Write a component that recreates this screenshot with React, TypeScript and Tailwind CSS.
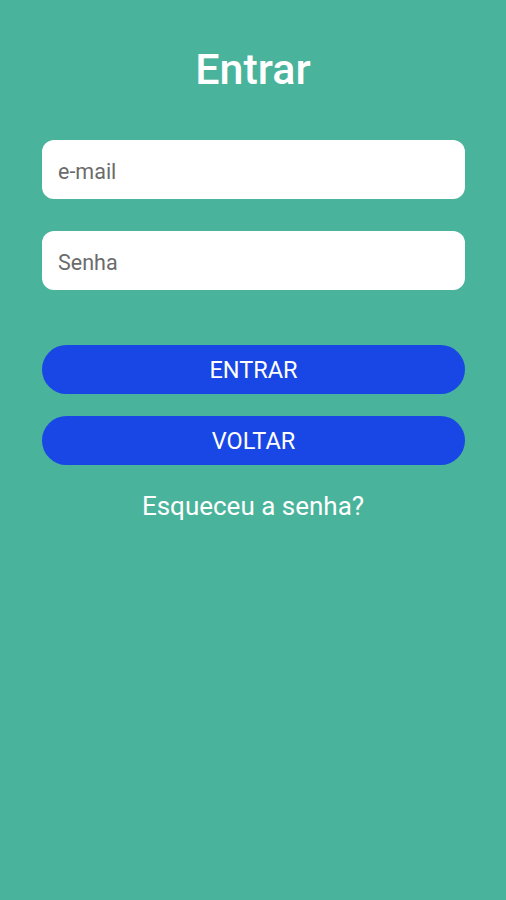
import React from "react";

export default function App() {
  return (
    <div
      className="w-[506px] h-[900px] bg-[#49b39b] flex flex-col px-[42px]"
      style={{ fontFamily: "Roboto, 'Noto Sans', sans-serif" }}
    >
      <h1 className="mt-[45px] h-[48px] leading-[48px] text-center text-white text-[43px] font-medium">
        Entrar
      </h1>
      <div className="mt-[47px] h-[59px] w-[423px] bg-white rounded-[12px] flex items-center pl-[16px] pt-[5px] text-[21.5px] text-[#6b6b6b]">
        e-mail
      </div>
      <div className="mt-[32px] h-[59px] w-[423px] bg-white rounded-[12px] flex items-center pl-[16px] pt-[5px] text-[21.5px] text-[#6b6b6b]">
        Senha
      </div>
      <div className="mt-[55px] h-[49px] w-[423px] bg-[#1947e5] rounded-full flex items-center justify-center pt-[3px] text-white text-[23.5px]">
        ENTRAR
      </div>
      <div className="mt-[22px] h-[49px] w-[423px] bg-[#1947e5] rounded-full flex items-center justify-center pt-[3px] text-white text-[23.5px]">
        VOLTAR
      </div>
      <div className="mt-[25px] h-[32px] leading-[32px] text-center text-white text-[26px]">
        Esqueceu a senha?
      </div>
    </div>
  );
}
